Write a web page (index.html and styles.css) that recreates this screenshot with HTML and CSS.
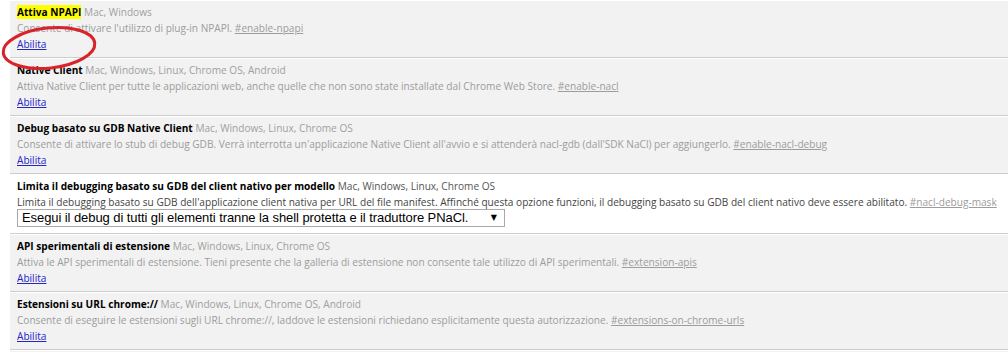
FILE: index.html
```html
<!DOCTYPE html>
<html lang="it">
<head>
  <meta charset="UTF-8">
  <meta name="viewport" content="width=device-width, initial-scale=1.0">
  <title>Esperimenti</title>
  <link rel="stylesheet" href="styles.css">
</head>
<body>
  <div class="experiments">
    <div class="experiment disabled">
      <div class="experiment-name"><span class="name highlight">Attiva NPAPI</span> <span class="platforms">Mac, Windows</span></div>
      <div class="description">Consente di attivare l'utilizzo di plug-in NPAPI. <a class="permalink" href="#enable-npapi">#enable-npapi</a></div>
      <div class="actions"><a class="toggle" href="#">Abilita</a></div>
    </div>

    <div class="experiment disabled">
      <div class="experiment-name"><span class="name">Native Client</span> <span class="platforms">Mac, Windows, Linux, Chrome OS, Android</span></div>
      <div class="description">Attiva Native Client per tutte le applicazioni web, anche quelle che non sono state installate dal Chrome Web Store. <a class="permalink" href="#enable-nacl">#enable-nacl</a></div>
      <div class="actions"><a class="toggle" href="#">Abilita</a></div>
    </div>

    <div class="experiment disabled">
      <div class="experiment-name"><span class="name">Debug basato su GDB Native Client</span> <span class="platforms">Mac, Windows, Linux, Chrome OS</span></div>
      <div class="description">Consente di attivare lo stub di debug GDB. Verrà interrotta un'applicazione Native Client all'avvio e si attenderà nacl-gdb (dall'SDK NaCl) per aggiungerlo. <a class="permalink" href="#enable-nacl-debug">#enable-nacl-debug</a></div>
      <div class="actions"><a class="toggle" href="#">Abilita</a></div>
    </div>

    <div class="experiment enabled">
      <div class="experiment-name"><span class="name">Limita il debugging basato su GDB del client nativo per modello</span> <span class="platforms">Mac, Windows, Linux, Chrome OS</span></div>
      <div class="description">Limita il debugging basato su GDB dell'applicazione client nativa per URL del file manifest. Affinché questa opzione funzioni, il debugging basato su GDB del client nativo deve essere abilitato. <a class="permalink" href="#nacl-debug-mask">#nacl-debug-mask</a></div>
      <div class="actions">
        <span class="select-wrap">
          <select class="experiment-select">
            <option>Esegui il debug di tutti gli elementi tranne la shell protetta e il traduttore PNaCl.</option>
            <option>Esegui il debug di tutto.</option>
          </select>
        </span>
      </div>
    </div>

    <div class="experiment disabled">
      <div class="experiment-name"><span class="name">API sperimentali di estensione</span> <span class="platforms">Mac, Windows, Linux, Chrome OS</span></div>
      <div class="description">Attiva le API sperimentali di estensione. Tieni presente che la galleria di estensione non consente tale utilizzo di API sperimentali. <a class="permalink" href="#extension-apis">#extension-apis</a></div>
      <div class="actions"><a class="toggle" href="#">Abilita</a></div>
    </div>

    <div class="experiment disabled">
      <div class="experiment-name"><span class="name">Estensioni su URL chrome://</span> <span class="platforms">Mac, Windows, Linux, Chrome OS, Android</span></div>
      <div class="description">Consente di eseguire le estensioni sugli URL chrome://, laddove le estensioni richiedano esplicitamente questa autorizzazione. <a class="permalink" href="#extensions-on-chrome-urls">#extensions-on-chrome-urls</a></div>
      <div class="actions"><a class="toggle" href="#">Abilita</a></div>
    </div>

    <div class="experiment disabled"></div>
  </div>

  <!-- cerchio rosso disegnato sopra lo screenshot -->
  <svg class="annotation" width="110" height="80" viewBox="0 0 110 80">
    <ellipse cx="49" cy="48" rx="46" ry="20" transform="rotate(-6 49 48)" fill="none" stroke="#d8232a" stroke-width="3"/>
  </svg>
</body>
</html>
```

FILE: styles.css
```css
* {
  margin: 0;
  padding: 0;
  box-sizing: border-box;
}

body {
  background-color: white;
  font-family: "Open Sans", "Noto Sans", sans-serif;
  font-size: 10.1px;
  line-height: 16px;
  color: #000;
  position: relative;
}

.experiments {
  display: flex;
  flex-direction: column;
  gap: 1px;
  padding: 1px 0 0 10px;
}

.experiment {
  padding: 3px 0 5px 7px;
  border-bottom: 1px solid #cdcdcd;
  min-height: 57px;
}

.experiment.disabled {
  background-color: #f2f2f2;
}

.experiment.enabled {
  background-color: #fff;
  min-height: 59px;
}

.name {
  font-weight: bold;
}

.highlight {
  background-color: #ffff00;
}

.platforms {
  color: #a0a0a0;
}

.enabled .platforms {
  color: #555;
}

.description {
  color: #9c9c9c;
  white-space: nowrap;
}

.enabled .description {
  color: #444;
}

.permalink {
  color: #9c9c9c;
}

.toggle {
  color: #2424c8;
}

.actions {
  height: 16px;
}

.select-wrap {
  position: relative;
  display: inline-block;
  margin-top: -1px;
}

.select-wrap::after {
  content: "\25BC";
  position: absolute;
  right: 8px;
  top: 0;
  font-family: "DejaVu Sans", sans-serif;
  font-size: 8px;
  line-height: 18px;
  color: #000;
  pointer-events: none;
}

.experiment-select {
  appearance: none;
  -webkit-appearance: none;
  font-family: "Liberation Sans", Arial, sans-serif;
  font-size: 13px;
  letter-spacing: -0.08px;
  line-height: 16px;
  height: 18px;
  width: 488px;
  padding: 0 22px 0 4px;
  border: 1px solid #a9a9a9;
  border-radius: 0;
  background-color: #fff;
  color: #000;
}

.annotation {
  position: absolute;
  left: 0;
  top: 0;
  pointer-events: none;
}
```
